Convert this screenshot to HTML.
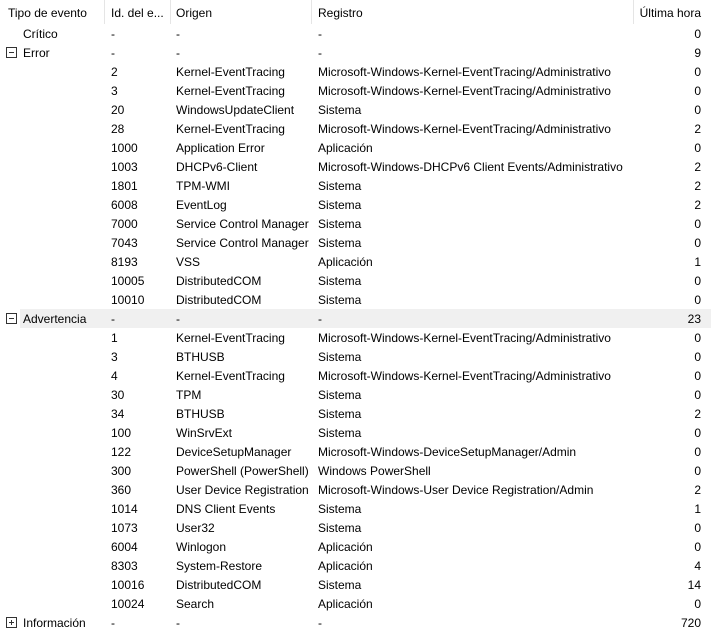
<!DOCTYPE html>
<html><head><meta charset="utf-8"><style>
body{margin:0;width:711px;height:632px;background:#fff;font-family:"Liberation Sans",sans-serif;font-size:12px;color:#000;overflow:hidden;position:relative}
.h{position:absolute;top:0;height:24px;left:0;width:711px}
.h span{position:absolute;top:6px}
.sep{position:absolute;top:0;width:1px;height:24px;background:#e5e5e5}
.r{position:absolute;left:0;width:711px;height:19px}
.r span{position:absolute;top:3px;white-space:nowrap}
.c1{left:23px}.c2{left:111px}.c3{left:176px}.c4{left:318px}.c5{right:10px}
.hl{background:#f0f0f0;left:20px;width:691px}
.box{position:absolute;left:6px;width:9px;height:9px;border:1px solid #333;top:4px}
.box:after{content:"";position:absolute;left:2px;top:4px;width:5px;height:1px;background:#333}
.box.p:before{content:"";position:absolute;left:4px;top:2px;width:1px;height:5px;background:#333}
</style></head><body>
<div class="h"><span style="left:8px">Tipo de evento</span><span style="left:111px">Id. del e...</span><span style="left:176px">Origen</span><span style="left:318px">Registro</span><span style="right:10px">Última hora</span></div>
<div class="sep" style="left:104px"></div><div class="sep" style="left:170px"></div><div class="sep" style="left:311px"></div><div class="sep" style="left:633px"></div>
<div class="r" style="top:24px"><span class="c1">Crítico</span><span class="c2">-</span><span class="c3">-</span><span class="c4">-</span><span class="c5">0</span></div>
<div class="r" style="top:43px"><div class="box"></div><span class="c1">Error</span><span class="c2">-</span><span class="c3">-</span><span class="c4">-</span><span class="c5">9</span></div>
<div class="r" style="top:62px"><span class="c2">2</span><span class="c3">Kernel-EventTracing</span><span class="c4">Microsoft-Windows-Kernel-EventTracing/Administrativo</span><span class="c5">0</span></div>
<div class="r" style="top:81px"><span class="c2">3</span><span class="c3">Kernel-EventTracing</span><span class="c4">Microsoft-Windows-Kernel-EventTracing/Administrativo</span><span class="c5">0</span></div>
<div class="r" style="top:100px"><span class="c2">20</span><span class="c3">WindowsUpdateClient</span><span class="c4">Sistema</span><span class="c5">0</span></div>
<div class="r" style="top:119px"><span class="c2">28</span><span class="c3">Kernel-EventTracing</span><span class="c4">Microsoft-Windows-Kernel-EventTracing/Administrativo</span><span class="c5">2</span></div>
<div class="r" style="top:138px"><span class="c2">1000</span><span class="c3">Application Error</span><span class="c4">Aplicación</span><span class="c5">0</span></div>
<div class="r" style="top:157px"><span class="c2">1003</span><span class="c3">DHCPv6-Client</span><span class="c4">Microsoft-Windows-DHCPv6 Client Events/Administrativo</span><span class="c5">2</span></div>
<div class="r" style="top:176px"><span class="c2">1801</span><span class="c3">TPM-WMI</span><span class="c4">Sistema</span><span class="c5">2</span></div>
<div class="r" style="top:195px"><span class="c2">6008</span><span class="c3">EventLog</span><span class="c4">Sistema</span><span class="c5">2</span></div>
<div class="r" style="top:214px"><span class="c2">7000</span><span class="c3">Service Control Manager</span><span class="c4">Sistema</span><span class="c5">0</span></div>
<div class="r" style="top:233px"><span class="c2">7043</span><span class="c3">Service Control Manager</span><span class="c4">Sistema</span><span class="c5">0</span></div>
<div class="r" style="top:252px"><span class="c2">8193</span><span class="c3">VSS</span><span class="c4">Aplicación</span><span class="c5">1</span></div>
<div class="r" style="top:271px"><span class="c2">10005</span><span class="c3">DistributedCOM</span><span class="c4">Sistema</span><span class="c5">0</span></div>
<div class="r" style="top:290px"><span class="c2">10010</span><span class="c3">DistributedCOM</span><span class="c4">Sistema</span><span class="c5">0</span></div>
<div class="r hl" style="top:309px"></div>
<div class="r" style="top:309px"><div class="box"></div><span class="c1">Advertencia</span><span class="c2">-</span><span class="c3">-</span><span class="c4">-</span><span class="c5">23</span></div>
<div class="r" style="top:328px"><span class="c2">1</span><span class="c3">Kernel-EventTracing</span><span class="c4">Microsoft-Windows-Kernel-EventTracing/Administrativo</span><span class="c5">0</span></div>
<div class="r" style="top:347px"><span class="c2">3</span><span class="c3">BTHUSB</span><span class="c4">Sistema</span><span class="c5">0</span></div>
<div class="r" style="top:366px"><span class="c2">4</span><span class="c3">Kernel-EventTracing</span><span class="c4">Microsoft-Windows-Kernel-EventTracing/Administrativo</span><span class="c5">0</span></div>
<div class="r" style="top:385px"><span class="c2">30</span><span class="c3">TPM</span><span class="c4">Sistema</span><span class="c5">0</span></div>
<div class="r" style="top:404px"><span class="c2">34</span><span class="c3">BTHUSB</span><span class="c4">Sistema</span><span class="c5">2</span></div>
<div class="r" style="top:423px"><span class="c2">100</span><span class="c3">WinSrvExt</span><span class="c4">Sistema</span><span class="c5">0</span></div>
<div class="r" style="top:442px"><span class="c2">122</span><span class="c3">DeviceSetupManager</span><span class="c4">Microsoft-Windows-DeviceSetupManager/Admin</span><span class="c5">0</span></div>
<div class="r" style="top:461px"><span class="c2">300</span><span class="c3">PowerShell (PowerShell)</span><span class="c4">Windows PowerShell</span><span class="c5">0</span></div>
<div class="r" style="top:480px"><span class="c2">360</span><span class="c3">User Device Registration</span><span class="c4">Microsoft-Windows-User Device Registration/Admin</span><span class="c5">2</span></div>
<div class="r" style="top:499px"><span class="c2">1014</span><span class="c3">DNS Client Events</span><span class="c4">Sistema</span><span class="c5">1</span></div>
<div class="r" style="top:518px"><span class="c2">1073</span><span class="c3">User32</span><span class="c4">Sistema</span><span class="c5">0</span></div>
<div class="r" style="top:537px"><span class="c2">6004</span><span class="c3">Winlogon</span><span class="c4">Aplicación</span><span class="c5">0</span></div>
<div class="r" style="top:556px"><span class="c2">8303</span><span class="c3">System-Restore</span><span class="c4">Aplicación</span><span class="c5">4</span></div>
<div class="r" style="top:575px"><span class="c2">10016</span><span class="c3">DistributedCOM</span><span class="c4">Sistema</span><span class="c5">14</span></div>
<div class="r" style="top:594px"><span class="c2">10024</span><span class="c3">Search</span><span class="c4">Aplicación</span><span class="c5">0</span></div>
<div class="r" style="top:613px"><div class="box p"></div><span class="c1">Información</span><span class="c2">-</span><span class="c3">-</span><span class="c4">-</span><span class="c5">720</span></div>
</body></html>
